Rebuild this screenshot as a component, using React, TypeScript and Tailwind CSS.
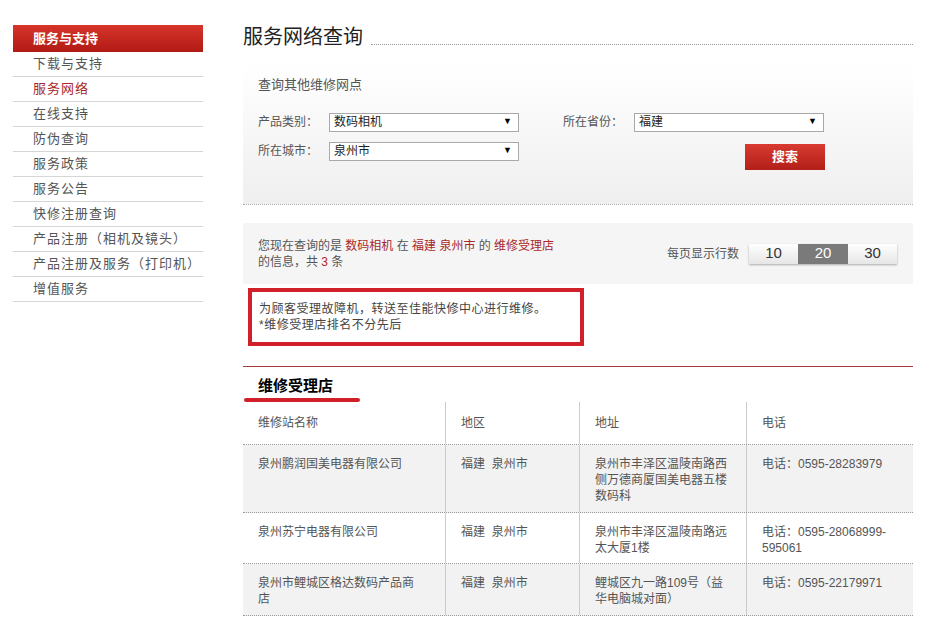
const font = { fontFamily: '"Liberation Sans", "Noto Sans CJK SC", sans-serif' }

const menu = [
  '下载与支持',
  '服务网络',
  '在线支持',
  '防伪查询',
  '服务政策',
  '服务公告',
  '快修注册查询',
  '产品注册（相机及镜头）',
  '产品注册及服务（打印机）',
  '增值服务',
]

const rows = [
  {
    name: '泉州鹏润国美电器有限公司',
    area: '福建  泉州市',
    addr: '泉州市丰泽区温陵南路西侧万德商厦国美电器五楼数码科',
    tel: '电话：0595-28283979',
    h: 'h-[68px]',
    bg: 'bg-[#f2f2f2]',
  },
  {
    name: '泉州苏宁电器有限公司',
    area: '福建  泉州市',
    addr: '泉州市丰泽区温陵南路远太大厦1楼',
    tel: '电话：0595-28068999-595061',
    h: 'h-[51px]',
    bg: 'bg-white',
  },
  {
    name: '泉州市鲤城区格达数码产品商店',
    area: '福建  泉州市',
    addr: '鲤城区九一路109号（益华电脑城对面）',
    tel: '电话：0595-22179971',
    h: 'h-[52px]',
    bg: 'bg-[#f2f2f2]',
  },
]

function Select({ value }: { value: string }) {
  return (
    <div className="flex h-[19px] w-[190px] items-center justify-between border border-[#a9a9a9] bg-white pl-[4px] pr-[6px] text-[12px] text-[#222]">
      <span>{value}</span>
      <span className="text-[9px] text-black">▼</span>
    </div>
  )
}

export default function App() {
  return (
    <div className="flex min-h-[642px] w-[943px] bg-white pt-[25px]" style={font}>
      {/* sidebar */}
      <div className="ml-[13px] w-[190px]">
        <div className="flex h-[27px] items-center bg-gradient-to-b from-[#d8342a] to-[#b01a14] pl-[20px] text-[13px] font-bold text-white">
          服务与支持
        </div>
        {menu.map((m) => (
          <div
            key={m}
            className={
              'flex h-[25px] items-center border-b border-[#d6d6d6] pl-[20px] text-[13px] tracking-[1px] ' +
              (m === '服务网络' ? 'text-[#a8282a]' : 'text-[#555]')
            }
          >
            {m}
          </div>
        ))}
      </div>

      {/* main */}
      <div className="ml-[40px] w-[670px]">
        <div className="flex items-end">
          <h1 className="text-[20px] leading-[24px] text-[#222]">服务网络查询</h1>
          <div className="mb-[4px] ml-[8px] flex-1 border-b border-dotted border-[#999]" />
        </div>

        {/* search box */}
        <div className="mt-[14px] h-[142px] border-b border-dotted border-[#aaa] bg-gradient-to-b from-white to-[#efefef] px-[15px] pt-[12px] text-[12px] text-[#555]">
          <div className="text-[13px]">查询其他维修网点</div>
          <div className="mt-[18px] flex">
            <div className="flex flex-col gap-[10px]">
              <div className="flex items-center">
                <span className="w-[71px]">产品类别：</span>
                <Select value="数码相机" />
              </div>
              <div className="flex items-center">
                <span className="w-[71px]">所在城市：</span>
                <Select value="泉州市" />
              </div>
            </div>
            <div className="ml-[44px] flex flex-col">
              <div className="flex items-center">
                <span className="w-[71px]">所在省份：</span>
                <Select value="福建" />
              </div>
              <div className="ml-[182px] mt-[12px] flex h-[26px] w-[80px] items-center justify-center bg-gradient-to-b from-[#d83a30] to-[#b21f18] text-[13px] font-bold text-white">
                搜索
              </div>
            </div>
          </div>
        </div>

        {/* result info */}
        <div className="mt-[18px] flex h-[61px] items-center justify-between bg-[#f5f5f5] pl-[15px] pr-[16px] text-[12px] text-[#555]">
          <div className="leading-[16px]">
            <div>
              您现在查询的是 <span className="text-[#a8282a]">数码相机</span> 在{' '}
              <span className="text-[#a8282a]">福建 泉州市</span> 的{' '}
              <span className="text-[#a8282a]">维修受理店</span>
            </div>
            <div>
              的信息，共 <span className="text-[#a8282a]">3</span> 条
            </div>
          </div>
          <div className="flex items-center">
            <span className="mr-[10px]">每页显示行数</span>
            <div className="flex h-[20px] text-[15px] shadow-[0_1px_2px_rgba(0,0,0,0.3)]">
              <div className="flex w-[49px] items-center justify-center bg-gradient-to-b from-white to-[#e6e6e6] text-[#333]">10</div>
              <div className="flex w-[50px] items-center justify-center bg-[#7a7a7a] text-white">20</div>
              <div className="flex w-[49px] items-center justify-center bg-gradient-to-b from-white to-[#e6e6e6] text-[#333]">30</div>
            </div>
          </div>
        </div>

        {/* notice */}
        <div className="ml-[5px] mt-[4px] w-[336px] border-[4px] border-[#d1202a] py-[9px] pl-[7px] text-[12px] leading-[16px] tracking-[0.5px] text-[#444]">
          <div>为顾客受理故障机，转送至佳能快修中心进行维修。</div>
          <div>*维修受理店排名不分先后</div>
        </div>

        {/* section */}
        <div className="mt-[20px] border-t border-[#a8393a]" />
        <div className="pl-[15px] pt-[10px] text-[15px] font-bold leading-[18px] text-black">维修受理店</div>
        <div className="ml-[1px] mt-[3px] h-[4px] w-[116px] rounded-full bg-[#d1202a]" />

        {/* table */}
        <div className="text-[12px] leading-[16px] text-[#555]">
          <div className="flex h-[43px] border-b border-dotted border-[#999]">
            <div className="flex w-[202px] items-center pl-[15px]">维修站名称</div>
            <div className="flex w-[134px] items-center border-l border-[#ccc] pl-[15px]">地区</div>
            <div className="flex w-[167px] items-center border-l border-[#ccc] pl-[15px]">地址</div>
            <div className="flex w-[167px] items-center border-l border-[#ccc] pl-[15px]">电话</div>
          </div>
          {rows.map((r) => (
            <div key={r.name} className={'flex border-b border-dotted border-[#999] ' + r.h + ' ' + r.bg}>
              <div className="w-[202px] pl-[15px] pr-[20px] pt-[11px]">{r.name}</div>
              <div className="w-[134px] whitespace-pre border-l border-[#ccc] pl-[15px] pt-[11px]">{r.area}</div>
              <div className="w-[167px] border-l border-[#ccc] pl-[15px] pr-[16px] pt-[11px]">{r.addr}</div>
              <div className="w-[167px] border-l border-[#ccc] pl-[15px] pr-[8px] pt-[11px]">{r.tel}</div>
            </div>
          ))}
        </div>
      </div>
    </div>
  )
}
